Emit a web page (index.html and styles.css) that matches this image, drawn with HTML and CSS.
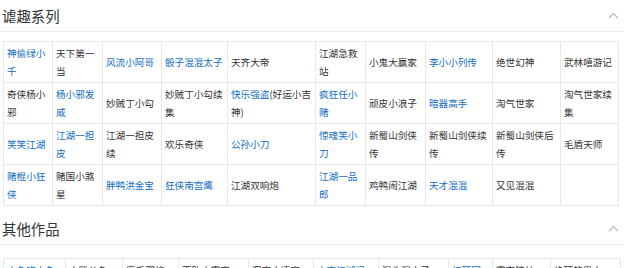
FILE: index.html
```html
<!DOCTYPE html>
<html lang="zh-CN">
<head>
<meta charset="utf-8">
<title>谑趣系列</title>
<link rel="stylesheet" href="styles.css">
</head>
<body>
<section class="module">
  <div class="module-head">
    <h2 class="module-title">谑趣系列</h2>
    <span class="toggle"><svg width="11" height="7" viewBox="0 0 11 7"><path d="M1 6 L5.5 1.5 L10 6" fill="none" stroke="#b4b4b4" stroke-width="1.1"/></svg></span>
  </div>
  <table class="works works-a">
    <colgroup>
      <col style="width:49px"><col style="width:50px"><col style="width:59px"><col style="width:66px"><col style="width:88px">
      <col style="width:50px"><col style="width:60px"><col style="width:67px"><col style="width:68px"><col style="width:58px">
    </colgroup>
    <tr>
      <td><a>神偷绿小千</a></td><td>天下第一当</td><td><a>风流小阿哥</a></td><td><a>骰子混混太子</a></td><td>天齐大帝</td>
      <td>江湖急救站</td><td>小鬼大赢家</td><td><a>李小小列传</a></td><td>绝世幻神</td><td>武林嘻游记</td>
    </tr>
    <tr>
      <td>奇侠杨小邪</td><td><a>杨小邪发威</a></td><td>妙贼丁小勾</td><td>妙贼丁小勾续集</td><td><a>快乐强盗</a>(好运小吉神)</td>
      <td><a>疯狂任小赌</a></td><td>顽皮小浪子</td><td><a>暗器高手</a></td><td>淘气世家</td><td>淘气世家续集</td>
    </tr>
    <tr>
      <td><a>笑笑江湖</a></td><td><a>江湖一担皮</a></td><td>江湖一担皮续</td><td>欢乐奇侠</td><td><a>公孙小刀</a></td>
      <td><a>惊魂笑小刀</a></td><td>新蜀山剑侠传</td><td>新蜀山剑侠续传</td><td>新蜀山剑侠后传</td><td>毛盾天师</td>
    </tr>
    <tr>
      <td><a>赌棍小狂侠</a></td><td>赌国小煞星</td><td><a>胖鸭洪金宝</a></td><td><a>狂侠南宫鹰</a></td><td>江湖双响炮</td>
      <td><a>江湖一品郎</a></td><td>鸡鸭闹江湖</td><td><a>天才混混</a></td><td>又见混混</td><td></td>
    </tr>
  </table>
</section>
<section class="module module-next">
  <div class="module-head">
    <h2 class="module-title">其他作品</h2>
    <span class="toggle"><svg width="11" height="7" viewBox="0 0 11 7"><path d="M1 6 L5.5 1.5 L10 6" fill="none" stroke="#b4b4b4" stroke-width="1.1"/></svg></span>
  </div>
  <table class="works works-b">
    <colgroup>
      <col style="width:62px"><col style="width:57px"><col style="width:56px"><col style="width:70px"><col style="width:65px">
      <col style="width:65px"><col style="width:70px"><col style="width:44px"><col style="width:58px"><col style="width:70px">
    </colgroup>
    <tr>
      <td><a>小鱼吃大鱼</a></td><td>木雕公鱼</td><td>魔手邪将</td><td>百败小霸宫</td><td>浑宫小凄家</td>
      <td><a>六宫江湖记</a></td><td>混头混小子</td><td><a>红顶冠</a></td><td>霸市狼幼</td><td>绝顶的男人</td>
    </tr>
  </table>
</section>
</body>
</html>
```
FILE: styles.css
```css
html, body {
  margin: 0;
  padding: 0;
  background: #fff;
}
body {
  font-family: "Noto Sans CJK SC", "Noto Sans", sans-serif;
  color: #333;
  overflow: hidden;
}
.module {
  width: 624px;
}
.module-next {
  margin-top: 7px;
}
.module-head {
  display: flex;
  align-items: center;
  justify-content: space-between;
  height: 31px;
  padding: 0 5px 0 2px;
  border-bottom: 1px solid #ececec;
}
.module-title {
  margin: 0;
  font-size: 14.4px;
  font-weight: normal;
  color: #333;
  line-height: 20px;
}
.toggle {
  display: flex;
  width: 11px;
  height: 7px;
}
.works {
  border-collapse: collapse;
  table-layout: fixed;
  margin-left: 3px;
}
.works-a {
  width: 615px;
  margin-top: 9px;
}
.works-b {
  width: 617px;
  margin-top: 13px;
}
.works td {
  border: 1px solid #e8e8e8;
  padding: 2px 3px;
  font-size: 9.6px;
  line-height: 18px;
  vertical-align: middle;
  color: #333;
  word-break: break-all;
}
.works a {
  color: #136ec2;
  text-decoration: none;
}
```
